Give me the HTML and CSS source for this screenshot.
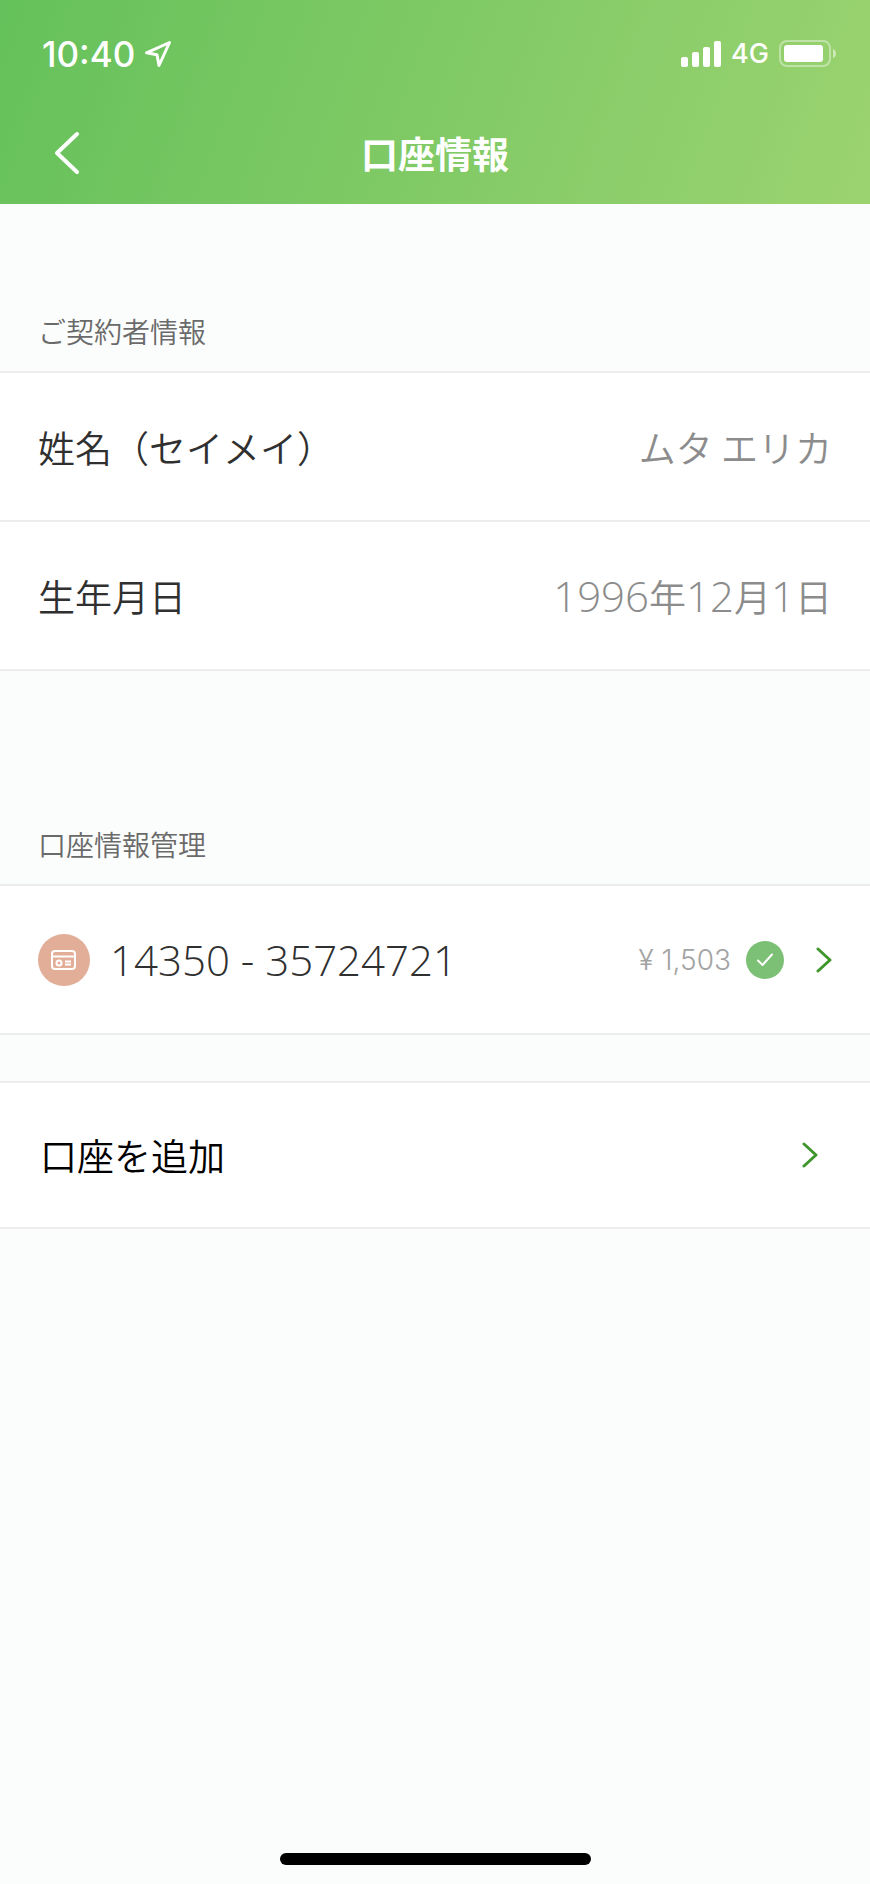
FILE: index.html
```
<!DOCTYPE html>
<html lang="ja">
<head>
	<meta charset="utf-8">
	<meta name="viewport" content="width=device-width,initial-scale=1">
	<title>口座情報</title>
	<link rel="stylesheet" href="styles.css">
</head>
<body>

	<header class="header">
		<div class="status-bar">
			<span class="time">10:40</span>
			<svg class="location" width="28" height="28" viewBox="0 0 28 28">
				<path d="M25.500 2.500 L2.500 12.800 L13 14.800 L15 25.500 Z"/>
			</svg>
			<div class="status-right">
				<svg width="40" height="26" viewBox="0 0 40 26" fill="#fff">
					<rect x="0" y="16" width="7" height="10" rx="2"/>
					<rect x="11" y="11" width="7" height="15" rx="2"/>
					<rect x="22" y="6" width="7" height="20" rx="2"/>
					<rect x="33" y="0" width="7" height="26" rx="2"/>
				</svg>
				<span class="network">4G</span>
				<svg width="58" height="28" viewBox="0 0 58 28">
					<rect x="1" y="1" width="50" height="25" rx="7" fill="none" stroke="#fff" stroke-width="2" opacity=".4"/>
					<rect x="5" y="5" width="39" height="17" rx="3" fill="#fff"/>
					<path d="M54 9 Q57 10 57 13.500 Q57 17 54 18 Z" fill="#fff" opacity=".5"/>
				</svg>
			</div>
		</div>
		<div class="nav-bar">
			<button class="back" type="button" aria-label="戻る">
				<svg width="28" height="44" viewBox="0 0 28 44">
					<path d="M24 3 L4 22 L24 41"/>
				</svg>
			</button>
			<h1>口座情報</h1>
		</div>
	</header>

	<main>
		<h2 class="section-title">ご契約者情報</h2>
		<dl class="list">
			<div class="row">
				<dt>姓名（セイメイ）</dt>
				<dd>ムタ エリカ</dd>
			</div>
			<div class="row">
				<dt>生年月日</dt>
				<dd><span class="num">1996</span>年<span class="num">12</span>月<span class="num">1</span>日</dd>
			</div>
		</dl>

		<h2 class="section-title section-title-next">口座情報管理</h2>
		<div class="list">
			<a class="row" href="#account">
				<span class="account-icon">
					<svg width="26" height="20" viewBox="0 0 26 20">
						<rect x="1" y="1" width="23" height="18" rx="3"/>
						<path d="M1 6.500 H24 M14 11.500 H20 M14 14.500 H20"/>
						<circle cx="8" cy="13" r="2.500"/>
					</svg>
				</span>
				<span class="num">14350 - 35724721</span>
				<span class="balance">¥ 1,503</span>
				<span class="check">
					<svg width="18" height="16" viewBox="0 0 18 16">
						<path d="M2 8.500 L6.500 13 L16 2.500"/>
					</svg>
				</span>
				<svg class="chevron" width="16" height="26" viewBox="0 0 16 26">
					<path d="M2 2 L14 13 L2 24"/>
				</svg>
			</a>
		</div>

		<div class="list list-add">
			<a class="row row-add" href="#add">
				<span>口座を追加</span>
				<svg class="chevron" width="16" height="26" viewBox="0 0 16 26">
					<path d="M2 2 L14 13 L2 24"/>
				</svg>
			</a>
		</div>
	</main>

	<div class="home-indicator"></div>

</body>
</html>
```
FILE: styles.css
```
:root {
	--line: #ededed;
	--gray: #8c8c8c;
	--green: #3f962c;
}

* {
	box-sizing: border-box;
}

body {
	display: flex;
	flex-direction: column;
	min-height: 100vh;
	margin: 0;
	font-family: "Noto Sans CJK JP", sans-serif;
	font-size: 37px;
	font-weight: 350;
	line-height: 48px;
	color: #303030;
	background: #fbfdfc;
}

svg {
	display: block;
	flex: none;
}

/* header */
.header {
	height: 204px;
	color: white;
	background: linear-gradient(110deg, #65c15b, #9bd370);
}

.status-bar {
	display: flex;
	align-items: center;
	height: 108px;
	padding: 0 33px 0 42px;
	font-family: Inter, sans-serif;
}

.time {
	font-size: 35px;
	font-weight: 550;
}

.location {
	margin-left: 9px;
	fill: none;
	stroke: white;
	stroke-width: 3;
	stroke-linejoin: round;
}

.status-right {
	display: flex;
	align-items: center;
	gap: 10px;
	margin-left: auto;
}

.network {
	font-size: 27px;
	font-weight: 450;
}

.nav-bar {
	display: grid;
	grid-template-columns: 80px 1fr 80px;
	align-items: center;
	height: 90px;
	padding: 0 20px;
}

.back {
	display: flex;
	align-items: center;
	justify-content: center;
	height: 80px;
	padding: 0 0 0 14px;
	border: 0;
	background: none;
	cursor: pointer;
}

.back path {
	fill: none;
	stroke: white;
	stroke-width: 4;
	stroke-linecap: round;
	stroke-linejoin: round;
}

h1 {
	margin: 0;
	font-size: 37px;
	font-weight: 700;
	text-align: center;
}

/* lists */
.section-title {
	margin: 0;
	padding: 107px 38px 20px;
	font-size: 28px;
	font-weight: 350;
	line-height: 40px;
	color: #6a6a6a;
}

.section-title-next {
	padding-top: 153px;
}

.list {
	margin: 0;
	border-top: 2px solid var(--line);
}

.list-add {
	margin-top: 46px;
}

.row {
	display: flex;
	align-items: center;
	height: 149px;
	padding: 0 38px;
	color: inherit;
	text-decoration: none;
	background: white;
	border-bottom: 2px solid var(--line);
}

.row-add {
	height: 146px;
	padding: 0 52px 0 40px;
	color: black;
}

.row-add .chevron {
	margin-left: auto;
}

dd {
	margin: 0 0 0 auto;
	color: var(--gray);
}

.num {
	font-family: "Open Sans", sans-serif;
	font-size: 42px;
	font-weight: 350;
}

.account-icon {
	display: flex;
	align-items: center;
	justify-content: center;
	width: 52px;
	height: 52px;
	margin-right: 20px;
	border-radius: 50%;
	background: #e3ae97;
}

.account-icon svg {
	fill: none;
	stroke: white;
	stroke-width: 2;
}

.balance {
	margin-left: auto;
	font-family: Inter, sans-serif;
	font-size: 28px;
	color: #a3a3a3;
}

.check {
	display: flex;
	align-items: center;
	justify-content: center;
	width: 38px;
	height: 38px;
	margin: 0 32px 0 15px;
	border-radius: 50%;
	background: #7bc074;
}

.check path {
	fill: none;
	stroke: white;
	stroke-width: 2;
	stroke-linecap: round;
	stroke-linejoin: round;
}

.chevron {
	fill: none;
	stroke: var(--green);
	stroke-width: 3;
	stroke-linecap: round;
	stroke-linejoin: round;
}

.home-indicator {
	width: 311px;
	height: 12px;
	margin: auto auto 19px;
	border-radius: 6px;
	background: black;
}
```
